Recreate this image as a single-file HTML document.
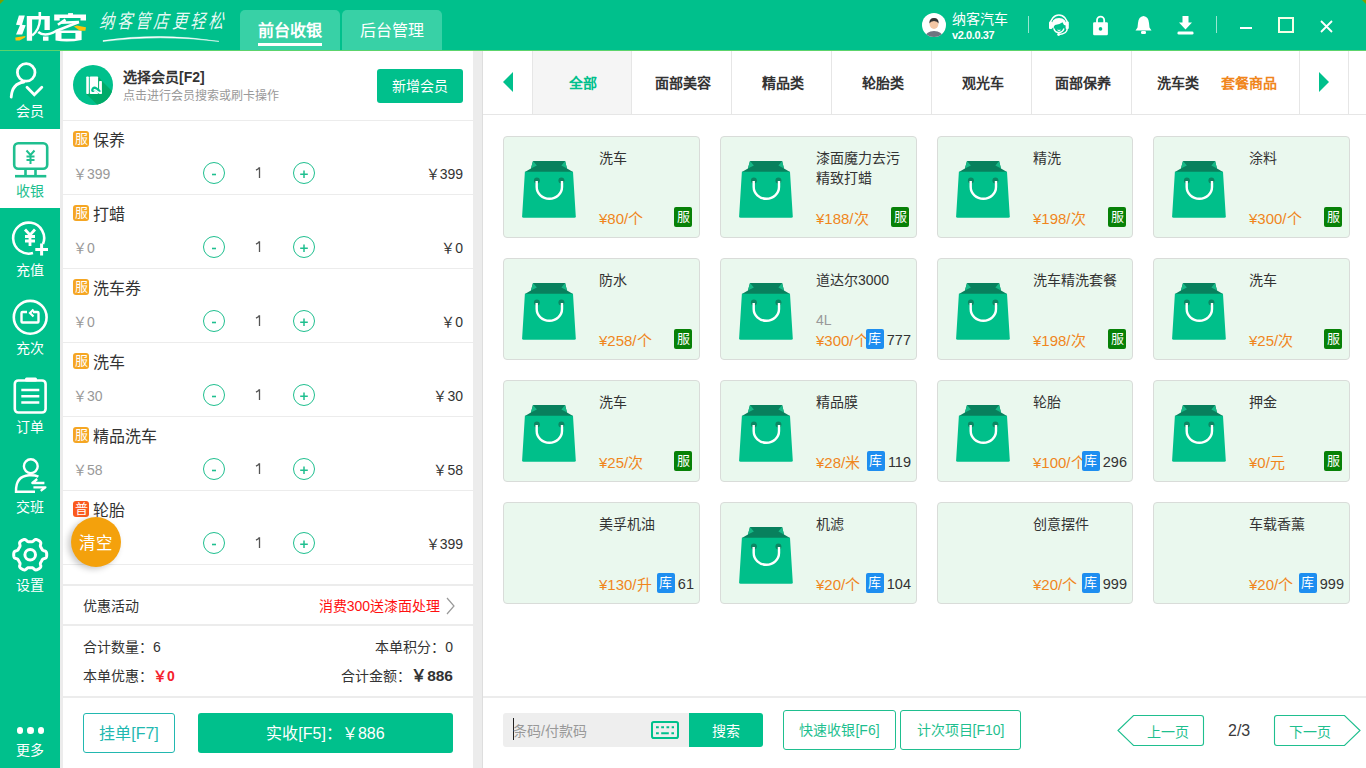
<!DOCTYPE html>
<html lang="zh-CN"><head><meta charset="utf-8">
<style>
*{margin:0;padding:0;box-sizing:border-box}
html,body{width:1366px;height:768px;overflow:hidden}
body{position:relative;font-family:"Liberation Sans",sans-serif;background:#fff;color:#333}
.a{position:absolute}
svg{display:block}
#hdr{left:0;top:0;width:1366px;height:50px;background:#00c08c}
#hdrline{left:0;top:50px;width:1366px;height:1px;background:#5cd46c}
.tab{top:10px;width:100px;height:40px;background:#38d1a6;border-radius:5px 5px 0 0;color:#fff;font-size:16px;text-align:center;line-height:42px}
#nav{left:0;top:51px;width:60px;height:717px;background:#00c08c}
.nv{left:0;width:60px;color:#fff;font-size:14px;text-align:center}
.gstrip{background:#ececec}
.row{left:63px;width:410px;height:74px;border-bottom:1px solid #ececec}
.tag{width:16px;height:16px;border-radius:3px;color:#fff;font-size:13px;line-height:16px;text-align:center;overflow:visible}
.nm{font-size:16px;color:#333;line-height:16px}
.pr{font-size:14px;color:#999;line-height:14px}
.circ{width:22px;height:22px;border:1px solid #1fbf8f;border-radius:50%;color:#1fbf8f;font-size:13px;text-align:center;line-height:20px}
.qty{font-size:14.5px;color:#444;line-height:15px}
.tot{font-size:14px;color:#333;line-height:14px;text-align:right}
.ct{top:51px;height:63px;width:100px;border-right:1px solid #e6e6e6;font-size:14px;font-weight:bold;text-align:center;line-height:65px;color:#333;text-indent:2px}
.card{width:197px;height:102px;background:#eaf8ee;border:1px solid #d9dcd9;border-radius:4px}
.cn{left:95px;top:11px;font-size:14px;line-height:20px;color:#333}
.cp{left:95px;bottom:10px;font-size:15px;line-height:16px;color:#f0861c}
.sv{width:18px;height:20px;background:#078107;color:#fff;border-radius:2px;font-size:13px;line-height:20px;text-align:center}
.ku{width:18px;height:20px;background:#1e8ef0;color:#fff;border-radius:2px;font-size:13px;line-height:20px;text-align:center}
.kg{right:5px;top:70px;height:20px;display:flex;align-items:center}.kg span{font-size:14.5px;line-height:20px;color:#333;margin-left:3px;position:relative;top:1px}
.gbtn{border:1px solid #1fbf8f;border-radius:3px;color:#1fbf8f;font-size:14px;text-align:center}
</style></head><body>
<!-- HEADER -->
<div class="a" id="hdr"></div>
<div class="a" id="hdrline"></div>
<div class="a tab" style="left:240px;font-weight:bold">前台收银<div class="a" style="left:18px;top:33px;width:64px;height:2.5px;background:#fff"></div></div>
<div class="a tab" style="left:342px">后台管理</div>

<!-- LOGO -->
<svg class="a" style="left:0;top:0" width="95" height="48" viewBox="0 0 95 48">
<path d="M18.9 15.5 H24.8 L22 24.8 L25.7 25.3 L22.2 34.6 H16 L20 25.3 L16 24.8 Z" fill="#fff"/>
<path d="M15.3 37.4 Q20 36.8 25.5 36.1 L25 37.6 Q21.5 39.8 19.5 40.6 H15.6 Z" fill="#ffc20a"/>
<path d="M26.8 16 H49.8 V29.9 H44.5 V19.5 H32.1 V40.75 H26.8 Z" fill="#fff"/>
<rect x="38.5" y="12" width="2.6" height="4.5" fill="#fff"/>
<path d="M40 19 Q39.5 30 32.1 35.5" fill="none" stroke="#fff" stroke-width="2.4"/>
<rect x="43" y="36.5" width="5.5" height="4.25" fill="#fff"/>
<path d="M54.2 14.6 H86 V20.4 H80.5 V18 H59.7 V20.4 H54.2 Z" fill="#fff"/>
<rect x="68.1" y="13.1" width="4.9" height="2" fill="#fff"/>
<path d="M57.9 24.8 L65.5 19.6 M60.6 22.8 L78.7 22" fill="none" stroke="#fff" stroke-width="2.6"/>
<path d="M38.2 32 Q45 37.5 56 31 L79 22" fill="none" stroke="#fff" stroke-width="2.6"/>
<path d="M55.5 30.6 H81.6 V40 Q68 42.8 55.5 40.6 Z M61.5 33 V38.8 H75.4 V33 Z" fill="#fff" fill-rule="evenodd"/>
<path d="M73.9 26.4 L77 25.5 Q82 26.8 86 27.2 L85.4 30.8 Q82 30.8 79.6 30.4 Z" fill="#ffc20a"/>
</svg>
<div class="a" style="left:100px;top:11px;font-family:'Liberation Serif',serif;font-style:italic;font-size:15px;line-height:22px;color:rgba(255,255,255,.92);letter-spacing:3.3px;transform:skewX(-4deg) scaleY(1.3);transform-origin:0 0;top:7px">纳客管店更轻松</div>
<svg class="a" style="left:100px;top:32px" width="122" height="12"><path d="M3 8.6 Q60 0 119 9.4 Q60 2.2 3 9.4 Z" fill="#fff" stroke="#fff" stroke-width="0.5"/></svg>

<!-- HEADER RIGHT -->
<svg class="a" style="left:922px;top:13px" width="24" height="24" viewBox="0 0 24 24"><defs><clipPath id="avc"><circle cx="12" cy="12" r="12"/></clipPath></defs><circle cx="12" cy="12" r="12" fill="#fff"/><g clip-path="url(#avc)"><path d="M3 24 Q4 18.5 12 18 Q20 18.5 21 24 Z" fill="#6f7480"/><ellipse cx="12" cy="11" rx="4.4" ry="5" fill="#f3c7a5"/><path d="M7.4 10.5 Q7 5 12 5 Q17 5 16.6 10.5 Q15.5 8 12 8 Q8.5 8 7.4 10.5 Z" fill="#333"/></g></svg>
<div class="a" style="left:952px;top:11px;font-size:14px;line-height:16px;color:#fff">纳客汽车</div>
<div class="a" style="left:952px;top:29px;font-size:11px;line-height:12px;color:#fff;font-weight:bold;letter-spacing:-0.4px">v2.0.0.37</div>
<div class="a" style="left:1028px;top:16px;width:1px;height:17px;background:rgba(255,255,255,.6)"></div>
<svg class="a" style="left:1040px;top:8px" width="36" height="34" viewBox="1040 8 36 34"><path d="M1050.2 25 A8.7 10 0 0 1 1067.6 25" fill="none" stroke="#fff" stroke-width="1.5"/><path d="M1051.5 27 Q1051 18 1059 18 Q1066.5 18 1066.3 25.5 L1064 25 L1062.5 22.3 Q1060 24.5 1055 25 Q1053.5 26 1053.5 29 Z" fill="#fff"/><rect x="1049" y="21.5" width="3.2" height="7.5" rx="1" fill="#fff"/><rect x="1065.6" y="21.5" width="3.2" height="7.5" rx="1" fill="#fff"/><path d="M1053.8 28.5 Q1055 32.5 1058.8 32.5 Q1062.6 32.5 1064 28.5" fill="none" stroke="#fff" stroke-width="1.4"/><path d="M1057.5 30 Q1059 31 1060.5 30" fill="none" stroke="#fff" stroke-width="1"/><path d="M1067.3 28.5 Q1067 34 1059 34.5" fill="none" stroke="#fff" stroke-width="1.5"/><circle cx="1058.6" cy="34.5" r="1.4" fill="#fff"/></svg>
<svg class="a" style="left:1092px;top:15px" width="17" height="21" viewBox="1092 15 17 21"><path d="M1097 23 V20.3 A3.6 3.6 0 0 1 1104.2 20.3 V23" fill="none" stroke="#fff" stroke-width="1.8"/><rect x="1093.1" y="22.2" width="14.8" height="13.1" rx="1.2" fill="#fff"/><circle cx="1100.5" cy="28.9" r="1.8" fill="#00c08c"/></svg>
<svg class="a" style="left:1135px;top:15px" width="17" height="20" viewBox="0 0 17 20"><path d="M8.5 1 Q13.5 1.5 14 8 L14.5 12.5 L16.5 15.5 H0.5 L2.5 12.5 L3 8 Q3.5 1.5 8.5 1 Z" fill="#fff"/><rect x="6" y="16" width="5" height="3" rx="1.2" fill="#fff"/></svg>
<svg class="a" style="left:1177px;top:15px" width="17" height="20" viewBox="0 0 17 20"><path d="M5.5 1 H11.5 V7.5 H15 L8.5 14.5 L2 7.5 H5.5 Z" fill="#fff"/><rect x="0.5" y="16.5" width="16" height="3" rx="1.3" fill="#fff"/></svg>
<div class="a" style="left:1216px;top:16px;width:1px;height:17px;background:rgba(255,255,255,.6)"></div>
<div class="a" style="left:1240px;top:27px;width:12px;height:2px;background:#fff"></div>
<div class="a" style="left:1278px;top:17px;width:16px;height:16px;border:2px solid #f4ffe6"></div>
<svg class="a" style="left:1320px;top:20px" width="13" height="13"><path d="M1 1 L12 12 M12 1 L1 12" stroke="#fff" stroke-width="1.8"/></svg>

<!-- NAV -->
<div class="a" id="nav"></div>
<div class="a" style="left:0;top:129px;width:60px;height:79px;background:#fff"></div>
<div class="a nv" style="top:100px">会员</div>
<div class="a nv" style="top:180px;color:#1fbf8f">收银</div>
<div class="a nv" style="top:259px">充值</div>
<div class="a nv" style="top:337px">充次</div>
<div class="a nv" style="top:416px">订单</div>
<div class="a nv" style="top:496px">交班</div>
<div class="a nv" style="top:574px">设置</div>
<div class="a nv" style="top:738.5px;left:0px">更多</div>

<!-- NAV ICONS -->
<svg class="a" style="left:0;top:51px" width="60" height="560" viewBox="0 51 60 560">
<g fill="none" stroke="#fff" stroke-width="2.8" stroke-linecap="round">
<circle cx="26.2" cy="72.4" r="8.8"/>
<path d="M11.2 97.2 Q12 83.5 24 82"/>
<path d="M27 87.2 L34.3 94.8 L41.8 87.2"/>
</g>
<g fill="none" stroke="#1fbf8f" stroke-width="2.6">
<rect x="14.2" y="143.3" width="33" height="25.5" rx="4"/>
<path d="M25.5 169 V175 M35.5 169 V175"/>
<path d="M15 176.2 H46.3"/>
<path d="M26.5 150.5 L30.5 155 L34.5 150.5 M30.5 155 V164 M26.5 156.5 H34.5 M26.5 160 H34.5" stroke-width="2"/>
</g>
<g fill="none" stroke="#fff" stroke-width="2.6">
<path d="M43 244 A15.5 15.5 0 1 0 33 253" />
<path d="M41.6 243.5 V255.5 M35.3 249.5 H48" stroke-width="3"/>
<path d="M25 229.5 L30 235 L35 229.5 M30 235 V246 M25 236.5 H35 M25 241 H35" stroke-width="2.8"/>
<circle cx="30.2" cy="317.3" r="16.4"/>
<path d="M27 312 H22.5 Q21.5 312 21.5 313 V321.5 Q21.5 322.5 22.5 322.5 H37.5 Q38.5 322.5 38.5 321.5 V313 Q38.5 312 37.5 312 H33" stroke-width="2.4"/>
<path d="M33.5 316.5 L30 313 L33.5 309.5" stroke-width="2.2"/>
<rect x="14.8" y="380.5" width="30.8" height="32" rx="3.5"/>
<path d="M21.3 390 H39.3 M21.3 396.2 H39.3 M21.3 402.5 H39.3" stroke-width="2.4"/>
<circle cx="30.8" cy="466.2" r="6.9" stroke-width="2.4"/>
<path d="M35 491.8 H16 Q15.6 476 29 475.3 Q35 475 38.4 476.6" stroke-width="2.4"/>
<path d="M44.4 483 H32.3 L37.2 479 M33.4 487.3 H45.4 L40.7 490.8" stroke-width="2.3" stroke-linejoin="round"/>
</g>
<rect x="25" y="377.5" width="12" height="4" rx="1.5" fill="#fff"/>
<g fill="none" stroke="#fff" stroke-width="2.8">
<path d="M46.70 554.70 L46.70 554.41 L46.69 554.12 L46.67 553.84 L46.64 553.55 L46.60 553.26 L46.55 552.98 L46.49 552.70 L46.40 552.42 L46.29 552.15 L46.14 551.89 L45.94 551.64 L45.67 551.41 L45.32 551.21 L44.91 551.03 L44.45 550.88 L43.99 550.75 L43.57 550.61 L43.22 550.47 L42.94 550.31 L42.71 550.15 L42.53 549.97 L42.38 549.78 L42.25 549.59 L42.13 549.39 L42.01 549.19 L41.90 548.99 L41.79 548.79 L41.68 548.59 L41.57 548.40 L41.46 548.20 L41.34 548.00 L41.23 547.81 L41.11 547.61 L40.99 547.42 L40.88 547.22 L40.76 547.03 L40.65 546.82 L40.55 546.61 L40.46 546.39 L40.40 546.14 L40.37 545.86 L40.37 545.54 L40.43 545.16 L40.52 544.74 L40.63 544.27 L40.73 543.80 L40.78 543.35 L40.78 542.95 L40.72 542.60 L40.60 542.30 L40.45 542.04 L40.27 541.80 L40.08 541.59 L39.87 541.40 L39.64 541.21 L39.42 541.04 L39.18 540.87 L38.94 540.71 L38.70 540.56 L38.45 540.41 L38.20 540.27 L37.94 540.14 L37.69 540.01 L37.42 539.89 L37.16 539.78 L36.89 539.68 L36.61 539.59 L36.33 539.53 L36.04 539.49 L35.74 539.49 L35.42 539.54 L35.09 539.66 L34.74 539.86 L34.38 540.13 L34.02 540.45 L33.67 540.78 L33.35 541.08 L33.05 541.31 L32.77 541.48 L32.51 541.59 L32.27 541.65 L32.03 541.69 L31.80 541.71 L31.56 541.72 L31.34 541.72 L31.11 541.71 L30.88 541.71 L30.65 541.70 L30.43 541.70 L30.20 541.70 L29.97 541.70 L29.75 541.70 L29.52 541.71 L29.29 541.71 L29.06 541.72 L28.84 541.72 L28.60 541.71 L28.37 541.69 L28.13 541.65 L27.89 541.59 L27.63 541.48 L27.35 541.31 L27.05 541.08 L26.73 540.78 L26.38 540.45 L26.02 540.13 L25.66 539.86 L25.31 539.66 L24.98 539.54 L24.66 539.49 L24.36 539.49 L24.07 539.53 L23.79 539.59 L23.51 539.68 L23.24 539.78 L22.98 539.89 L22.71 540.01 L22.46 540.14 L22.20 540.27 L21.95 540.41 L21.70 540.56 L21.46 540.71 L21.22 540.87 L20.98 541.04 L20.76 541.21 L20.53 541.40 L20.32 541.59 L20.13 541.80 L19.95 542.04 L19.80 542.30 L19.68 542.60 L19.62 542.95 L19.62 543.35 L19.67 543.80 L19.77 544.27 L19.88 544.74 L19.97 545.16 L20.03 545.54 L20.03 545.86 L20.00 546.14 L19.94 546.39 L19.85 546.61 L19.75 546.82 L19.64 547.03 L19.52 547.22 L19.41 547.42 L19.29 547.61 L19.17 547.81 L19.06 548.00 L18.94 548.20 L18.83 548.40 L18.72 548.59 L18.61 548.79 L18.50 548.99 L18.39 549.19 L18.27 549.39 L18.15 549.59 L18.02 549.78 L17.87 549.97 L17.69 550.15 L17.46 550.31 L17.18 550.47 L16.83 550.61 L16.41 550.75 L15.95 550.88 L15.49 551.03 L15.08 551.21 L14.73 551.41 L14.46 551.64 L14.26 551.89 L14.11 552.15 L14.00 552.42 L13.91 552.70 L13.85 552.98 L13.80 553.26 L13.76 553.55 L13.73 553.84 L13.71 554.12 L13.70 554.41 L13.70 554.70 L13.70 554.99 L13.71 555.28 L13.73 555.56 L13.76 555.85 L13.80 556.14 L13.85 556.42 L13.91 556.70 L14.00 556.98 L14.11 557.25 L14.26 557.51 L14.46 557.76 L14.73 557.99 L15.08 558.19 L15.49 558.37 L15.95 558.52 L16.41 558.65 L16.83 558.79 L17.18 558.93 L17.46 559.09 L17.69 559.25 L17.87 559.43 L18.02 559.62 L18.15 559.81 L18.27 560.01 L18.39 560.21 L18.50 560.41 L18.61 560.61 L18.72 560.81 L18.83 561.00 L18.94 561.20 L19.06 561.40 L19.17 561.59 L19.29 561.79 L19.41 561.98 L19.52 562.18 L19.64 562.37 L19.75 562.58 L19.85 562.79 L19.94 563.01 L20.00 563.26 L20.03 563.54 L20.03 563.86 L19.97 564.24 L19.88 564.66 L19.77 565.13 L19.67 565.60 L19.62 566.05 L19.62 566.45 L19.68 566.80 L19.80 567.10 L19.95 567.36 L20.13 567.60 L20.32 567.81 L20.53 568.00 L20.76 568.19 L20.98 568.36 L21.22 568.53 L21.46 568.69 L21.70 568.84 L21.95 568.99 L22.20 569.13 L22.46 569.26 L22.71 569.39 L22.98 569.51 L23.24 569.62 L23.51 569.72 L23.79 569.81 L24.07 569.87 L24.36 569.91 L24.66 569.91 L24.98 569.86 L25.31 569.74 L25.66 569.54 L26.02 569.27 L26.38 568.95 L26.73 568.62 L27.05 568.32 L27.35 568.09 L27.63 567.92 L27.89 567.81 L28.13 567.75 L28.37 567.71 L28.60 567.69 L28.84 567.68 L29.06 567.68 L29.29 567.69 L29.52 567.69 L29.75 567.70 L29.97 567.70 L30.20 567.70 L30.43 567.70 L30.65 567.70 L30.88 567.69 L31.11 567.69 L31.34 567.68 L31.56 567.68 L31.80 567.69 L32.03 567.71 L32.27 567.75 L32.51 567.81 L32.77 567.92 L33.05 568.09 L33.35 568.32 L33.67 568.62 L34.02 568.95 L34.38 569.27 L34.74 569.54 L35.09 569.74 L35.42 569.86 L35.74 569.91 L36.04 569.91 L36.33 569.87 L36.61 569.81 L36.89 569.72 L37.16 569.62 L37.42 569.51 L37.69 569.39 L37.94 569.26 L38.20 569.13 L38.45 568.99 L38.70 568.84 L38.94 568.69 L39.18 568.53 L39.42 568.36 L39.64 568.19 L39.87 568.00 L40.08 567.81 L40.27 567.60 L40.45 567.36 L40.60 567.10 L40.72 566.80 L40.78 566.45 L40.78 566.05 L40.73 565.60 L40.63 565.13 L40.52 564.66 L40.43 564.24 L40.37 563.86 L40.37 563.54 L40.40 563.26 L40.46 563.01 L40.55 562.79 L40.65 562.58 L40.76 562.37 L40.88 562.18 L40.99 561.98 L41.11 561.79 L41.23 561.59 L41.34 561.40 L41.46 561.20 L41.57 561.00 L41.68 560.81 L41.79 560.61 L41.90 560.41 L42.01 560.21 L42.13 560.01 L42.25 559.81 L42.38 559.62 L42.53 559.43 L42.71 559.25 L42.94 559.09 L43.22 558.93 L43.57 558.79 L43.99 558.65 L44.45 558.52 L44.91 558.37 L45.32 558.19 L45.67 557.99 L45.94 557.76 L46.14 557.51 L46.29 557.25 L46.40 556.98 L46.49 556.70 L46.55 556.42 L46.60 556.14 L46.64 555.85 L46.67 555.56 L46.69 555.28 L46.70 554.99 L46.70 554.70 Z" stroke-width="3" stroke-linejoin="round"/>
<circle cx="30.2" cy="554.7" r="5.3" stroke-width="3"/>
</g>
</svg>
<div class="a" style="left:16.8px;top:727px;width:6.6px;height:6.6px;border-radius:50%;background:#fff"></div>
<div class="a" style="left:27.3px;top:727px;width:6.6px;height:6.6px;border-radius:50%;background:#fff"></div>
<div class="a" style="left:37.9px;top:727px;width:6.6px;height:6.6px;border-radius:50%;background:#fff"></div>

<!-- strips -->
<div class="a gstrip" style="left:60px;top:51px;width:3px;height:717px"></div>
<div class="a gstrip" style="left:473px;top:51px;width:10px;height:717px;border-right:1px solid #dedede"></div>

<!-- LEFT PANEL -->
<div class="a" style="left:63px;top:120px;width:410px;height:1px;background:#ececec"></div>
<svg class="a" style="left:73px;top:64.75px" width="40" height="40" viewBox="0 0 40 40"><defs><clipPath id="mc"><circle cx="20" cy="20" r="20"/></clipPath></defs><circle cx="20" cy="20" r="20" fill="#00c08c"/><path d="M13.5 29.2 L25.5 11.5 L29 16 L52 39 L37 52 Z" fill="#00ab68" clip-path="url(#mc)"/><rect x="13.25" y="11.45" width="2.6" height="17.6" rx="0.8" fill="#fff"/><rect x="16.8" y="11.45" width="8.3" height="17.6" rx="0.8" fill="#fff"/><rect x="26.1" y="16.05" width="2.8" height="13" rx="0.8" fill="#fff"/><path d="M19.9 25.2 Q20.6 22.4 23 24 L25.8 26.2" fill="none" stroke="#00c08c" stroke-width="3.6" stroke-linecap="round"/><path d="M20.9 25.6 Q21.3 24.2 22.7 25.1 L25 27 Q25.9 27.7 27.2 27.7 H28.9" fill="none" stroke="#fff" stroke-width="1.6"/></svg>
<div class="a" style="left:123px;top:69px;font-size:14px;font-weight:bold;color:#333;line-height:16px">选择会员[F2]</div>
<div class="a" style="left:123px;top:89px;font-size:12px;color:#999;line-height:14px">点击进行会员搜索或刷卡操作</div>
<div class="a" style="left:377px;top:69px;width:86px;height:34px;background:#00c08c;border-radius:3px;color:#fff;font-size:14px;line-height:34px;text-align:center">新增会员</div>

<!-- ROWS -->
<div class="a" style="left:63px;top:194px;width:410px;height:1px;background:#ececec"></div>
<div class="a tag" style="left:73px;top:131px;background:#f5a623">服</div>
<div class="a nm" style="left:93px;top:133px">保养</div>
<div class="a pr" style="left:73px;top:167px">￥399</div>
<div class="a circ" style="left:203px;top:162px"><svg class="a" style="left:-1px;top:-1px" width="22" height="22"><path d="M9 12.5 H13" stroke="#1fbf8f" stroke-width="1.6"/></svg></div>
<svg class="a" style="left:250px;top:164px" width="16" height="20"><path d="M9.5 3.3 V14 M6 6.2 Q8.3 5 9.5 3.3" fill="none" stroke="#555" stroke-width="1.3"/></svg>
<div class="a circ" style="left:293px;top:162px"><svg class="a" style="left:-1px;top:-1px" width="22" height="22"><path d="M7.2 12.2 H14.8 M11 8.4 V16" stroke="#1fbf8f" stroke-width="1.5"/></svg></div>
<div class="a tot" style="left:363px;width:100px;top:167px">￥399</div>
<div class="a" style="left:63px;top:268px;width:410px;height:1px;background:#ececec"></div>
<div class="a tag" style="left:73px;top:205px;background:#f5a623">服</div>
<div class="a nm" style="left:93px;top:207px">打蜡</div>
<div class="a pr" style="left:73px;top:241px">￥0</div>
<div class="a circ" style="left:203px;top:236px"><svg class="a" style="left:-1px;top:-1px" width="22" height="22"><path d="M9 12.5 H13" stroke="#1fbf8f" stroke-width="1.6"/></svg></div>
<svg class="a" style="left:250px;top:238px" width="16" height="20"><path d="M9.5 3.3 V14 M6 6.2 Q8.3 5 9.5 3.3" fill="none" stroke="#555" stroke-width="1.3"/></svg>
<div class="a circ" style="left:293px;top:236px"><svg class="a" style="left:-1px;top:-1px" width="22" height="22"><path d="M7.2 12.2 H14.8 M11 8.4 V16" stroke="#1fbf8f" stroke-width="1.5"/></svg></div>
<div class="a tot" style="left:363px;width:100px;top:241px">￥0</div>
<div class="a" style="left:63px;top:342px;width:410px;height:1px;background:#ececec"></div>
<div class="a tag" style="left:73px;top:279px;background:#f5a623">服</div>
<div class="a nm" style="left:93px;top:281px">洗车券</div>
<div class="a pr" style="left:73px;top:315px">￥0</div>
<div class="a circ" style="left:203px;top:310px"><svg class="a" style="left:-1px;top:-1px" width="22" height="22"><path d="M9 12.5 H13" stroke="#1fbf8f" stroke-width="1.6"/></svg></div>
<svg class="a" style="left:250px;top:312px" width="16" height="20"><path d="M9.5 3.3 V14 M6 6.2 Q8.3 5 9.5 3.3" fill="none" stroke="#555" stroke-width="1.3"/></svg>
<div class="a circ" style="left:293px;top:310px"><svg class="a" style="left:-1px;top:-1px" width="22" height="22"><path d="M7.2 12.2 H14.8 M11 8.4 V16" stroke="#1fbf8f" stroke-width="1.5"/></svg></div>
<div class="a tot" style="left:363px;width:100px;top:315px">￥0</div>
<div class="a" style="left:63px;top:416px;width:410px;height:1px;background:#ececec"></div>
<div class="a tag" style="left:73px;top:353px;background:#f5a623">服</div>
<div class="a nm" style="left:93px;top:355px">洗车</div>
<div class="a pr" style="left:73px;top:389px">￥30</div>
<div class="a circ" style="left:203px;top:384px"><svg class="a" style="left:-1px;top:-1px" width="22" height="22"><path d="M9 12.5 H13" stroke="#1fbf8f" stroke-width="1.6"/></svg></div>
<svg class="a" style="left:250px;top:386px" width="16" height="20"><path d="M9.5 3.3 V14 M6 6.2 Q8.3 5 9.5 3.3" fill="none" stroke="#555" stroke-width="1.3"/></svg>
<div class="a circ" style="left:293px;top:384px"><svg class="a" style="left:-1px;top:-1px" width="22" height="22"><path d="M7.2 12.2 H14.8 M11 8.4 V16" stroke="#1fbf8f" stroke-width="1.5"/></svg></div>
<div class="a tot" style="left:363px;width:100px;top:389px">￥30</div>
<div class="a" style="left:63px;top:490px;width:410px;height:1px;background:#ececec"></div>
<div class="a tag" style="left:73px;top:427px;background:#f5a623">服</div>
<div class="a nm" style="left:93px;top:429px">精品洗车</div>
<div class="a pr" style="left:73px;top:463px">￥58</div>
<div class="a circ" style="left:203px;top:458px"><svg class="a" style="left:-1px;top:-1px" width="22" height="22"><path d="M9 12.5 H13" stroke="#1fbf8f" stroke-width="1.6"/></svg></div>
<svg class="a" style="left:250px;top:460px" width="16" height="20"><path d="M9.5 3.3 V14 M6 6.2 Q8.3 5 9.5 3.3" fill="none" stroke="#555" stroke-width="1.3"/></svg>
<div class="a circ" style="left:293px;top:458px"><svg class="a" style="left:-1px;top:-1px" width="22" height="22"><path d="M7.2 12.2 H14.8 M11 8.4 V16" stroke="#1fbf8f" stroke-width="1.5"/></svg></div>
<div class="a tot" style="left:363px;width:100px;top:463px">￥58</div>
<div class="a" style="left:63px;top:564px;width:410px;height:1px;background:#ececec"></div>
<div class="a tag" style="left:73px;top:501px;background:#fa5a1e">普</div>
<div class="a nm" style="left:93px;top:503px">轮胎</div>
<div class="a pr" style="left:73px;top:537px">￥399</div>
<div class="a circ" style="left:203px;top:532px"><svg class="a" style="left:-1px;top:-1px" width="22" height="22"><path d="M9 12.5 H13" stroke="#1fbf8f" stroke-width="1.6"/></svg></div>
<svg class="a" style="left:250px;top:534px" width="16" height="20"><path d="M9.5 3.3 V14 M6 6.2 Q8.3 5 9.5 3.3" fill="none" stroke="#555" stroke-width="1.3"/></svg>
<div class="a circ" style="left:293px;top:532px"><svg class="a" style="left:-1px;top:-1px" width="22" height="22"><path d="M7.2 12.2 H14.8 M11 8.4 V16" stroke="#1fbf8f" stroke-width="1.5"/></svg></div>
<div class="a tot" style="left:363px;width:100px;top:537px">￥399</div>
<!-- LEFT BOTTOM -->
<div class="a" style="left:71px;top:517px;width:50px;height:50px;border-radius:50%;background:#f4a10c;box-shadow:-3px 2px 6px rgba(0,0,0,.22);color:#fff;font-size:16.5px;line-height:52px;text-align:center">清空</div>
<div class="a" style="left:63px;top:584px;width:410px;height:2px;background:#ececec"></div>
<div class="a" style="left:83px;top:598px;font-size:14px;line-height:16px;color:#333">优惠活动</div>
<div class="a" style="left:298px;width:142px;top:598px;font-size:14px;line-height:16px;color:#ff1010;text-align:right">消费300送漆面处理</div>
<svg class="a" style="left:445px;top:597px" width="12" height="18"><path d="M2 1 L9 9 L2 17" fill="none" stroke="#999" stroke-width="1.2"/></svg>
<div class="a" style="left:63px;top:624px;width:410px;height:2px;background:#ececec"></div>
<div class="a" style="left:83px;top:639px;font-size:14px;line-height:16px;color:#333">合计数量：6</div>
<div class="a" style="left:300px;width:153px;top:639px;font-size:14px;line-height:16px;color:#333;text-align:right">本单积分：0</div>
<div class="a" style="left:83px;top:668px;font-size:14px;line-height:16px;color:#333">本单优惠：<b style="color:#f5222d">￥0</b></div>
<div class="a" style="left:300px;width:153px;top:668px;font-size:14px;line-height:16px;color:#333;text-align:right">合计金额：<b style="font-size:15.5px">￥886</b></div>
<div class="a" style="left:63px;top:696px;width:410px;height:2px;background:#ececec"></div>
<div class="a" style="left:83px;top:713px;width:92px;height:40px;border:1px solid #22b8b0;border-radius:3px;color:#22b8b0;font-size:16px;line-height:40px;text-align:center">挂单[F7]</div>
<div class="a" style="left:198px;top:713px;width:255px;height:40px;background:#00c08c;border-radius:3px;color:#fff;font-size:16px;line-height:42px;text-align:center">实收[F5]：￥886</div>

<!-- RIGHT -->
<div class="a" style="left:483px;top:114px;width:883px;height:1px;background:#e6e6e6"></div>
<svg class="a" style="left:502px;top:72px" width="12" height="20"><path d="M1 10 L11 0 V20 Z" fill="#00c08c"/></svg>
<div class="a" style="left:532px;top:51px;width:1px;height:63px;background:#e6e6e6"></div>
<div class="a ct" style="left:533px;background:#f5f5f5;color:#00c08c;width:99px">全部</div>
<div class="a ct" style="left:633px;width:99px">面部美容</div>
<div class="a ct" style="left:733px;width:99px">精品类</div>
<div class="a ct" style="left:833px;width:99px">轮胎类</div>
<div class="a ct" style="left:933px;width:99px">观光车</div>
<div class="a ct" style="left:1033px;width:99px">面部保养</div>
<div class="a ct" style="left:1133px;width:167px;border-right:1px solid #e6e6e6;text-align:left;padding-left:22px">洗车类<span style="color:#f0861c;margin-left:22px">套餐商品</span></div>
<svg class="a" style="left:1318px;top:72px" width="12" height="20"><path d="M11 10 L1 0 V20 Z" fill="#00c08c"/></svg>
<div class="a" style="left:1348px;top:51px;width:1px;height:63px;background:#e6e6e6"></div>
<div class="a card" style="left:503px;top:136px"><svg class="a" style="left:14px;top:19px" width="62" height="66" viewBox="0 0 62 66"><path d="M15 5 H47.1 L49 12.5 L55 15.9 H6.9 L12.9 12.5 Z" fill="#08805d"/><path d="M15 5 L18.9 9.6 L12.9 12.5 Z M47.1 5 L43.4 9.6 L49 12.5 Z" fill="#16b886"/><path d="M6.9 15.8 H55 L57.8 60.2 Q57.9 61.8 56.3 61.8 H5.6 Q4 61.8 4.1 60.2 Z" fill="#00bf8a"/><circle cx="18.9" cy="24.5" r="3" fill="#0b8763"/><circle cx="43.4" cy="24.5" r="3" fill="#0b8763"/><path d="M18.7 25 V31 A12.65 11.8 0 0 0 44 31 V25" fill="none" stroke="#fff" stroke-width="2.4"/></svg><div class="a cn">洗车</div><div class="a cp">¥80/个</div><div class="a sv" style="left:170px;top:70px">服</div></div>
<div class="a card" style="left:720px;top:136px"><svg class="a" style="left:14px;top:19px" width="62" height="66" viewBox="0 0 62 66"><path d="M15 5 H47.1 L49 12.5 L55 15.9 H6.9 L12.9 12.5 Z" fill="#08805d"/><path d="M15 5 L18.9 9.6 L12.9 12.5 Z M47.1 5 L43.4 9.6 L49 12.5 Z" fill="#16b886"/><path d="M6.9 15.8 H55 L57.8 60.2 Q57.9 61.8 56.3 61.8 H5.6 Q4 61.8 4.1 60.2 Z" fill="#00bf8a"/><circle cx="18.9" cy="24.5" r="3" fill="#0b8763"/><circle cx="43.4" cy="24.5" r="3" fill="#0b8763"/><path d="M18.7 25 V31 A12.65 11.8 0 0 0 44 31 V25" fill="none" stroke="#fff" stroke-width="2.4"/></svg><div class="a cn">漆面魔力去污<br>精致打蜡</div><div class="a cp">¥188/次</div><div class="a sv" style="left:170px;top:70px">服</div></div>
<div class="a card" style="width:196px;left:937px;top:136px"><svg class="a" style="left:14px;top:19px" width="62" height="66" viewBox="0 0 62 66"><path d="M15 5 H47.1 L49 12.5 L55 15.9 H6.9 L12.9 12.5 Z" fill="#08805d"/><path d="M15 5 L18.9 9.6 L12.9 12.5 Z M47.1 5 L43.4 9.6 L49 12.5 Z" fill="#16b886"/><path d="M6.9 15.8 H55 L57.8 60.2 Q57.9 61.8 56.3 61.8 H5.6 Q4 61.8 4.1 60.2 Z" fill="#00bf8a"/><circle cx="18.9" cy="24.5" r="3" fill="#0b8763"/><circle cx="43.4" cy="24.5" r="3" fill="#0b8763"/><path d="M18.7 25 V31 A12.65 11.8 0 0 0 44 31 V25" fill="none" stroke="#fff" stroke-width="2.4"/></svg><div class="a cn">精洗</div><div class="a cp">¥198/次</div><div class="a sv" style="left:170px;top:70px">服</div></div>
<div class="a card" style="left:1153px;top:136px"><svg class="a" style="left:14px;top:19px" width="62" height="66" viewBox="0 0 62 66"><path d="M15 5 H47.1 L49 12.5 L55 15.9 H6.9 L12.9 12.5 Z" fill="#08805d"/><path d="M15 5 L18.9 9.6 L12.9 12.5 Z M47.1 5 L43.4 9.6 L49 12.5 Z" fill="#16b886"/><path d="M6.9 15.8 H55 L57.8 60.2 Q57.9 61.8 56.3 61.8 H5.6 Q4 61.8 4.1 60.2 Z" fill="#00bf8a"/><circle cx="18.9" cy="24.5" r="3" fill="#0b8763"/><circle cx="43.4" cy="24.5" r="3" fill="#0b8763"/><path d="M18.7 25 V31 A12.65 11.8 0 0 0 44 31 V25" fill="none" stroke="#fff" stroke-width="2.4"/></svg><div class="a cn">涂料</div><div class="a cp">¥300/个</div><div class="a sv" style="left:170px;top:70px">服</div></div>
<div class="a card" style="left:503px;top:258px"><svg class="a" style="left:14px;top:19px" width="62" height="66" viewBox="0 0 62 66"><path d="M15 5 H47.1 L49 12.5 L55 15.9 H6.9 L12.9 12.5 Z" fill="#08805d"/><path d="M15 5 L18.9 9.6 L12.9 12.5 Z M47.1 5 L43.4 9.6 L49 12.5 Z" fill="#16b886"/><path d="M6.9 15.8 H55 L57.8 60.2 Q57.9 61.8 56.3 61.8 H5.6 Q4 61.8 4.1 60.2 Z" fill="#00bf8a"/><circle cx="18.9" cy="24.5" r="3" fill="#0b8763"/><circle cx="43.4" cy="24.5" r="3" fill="#0b8763"/><path d="M18.7 25 V31 A12.65 11.8 0 0 0 44 31 V25" fill="none" stroke="#fff" stroke-width="2.4"/></svg><div class="a cn">防水</div><div class="a cp">¥258/个</div><div class="a sv" style="left:170px;top:70px">服</div></div>
<div class="a card" style="left:720px;top:258px"><svg class="a" style="left:14px;top:19px" width="62" height="66" viewBox="0 0 62 66"><path d="M15 5 H47.1 L49 12.5 L55 15.9 H6.9 L12.9 12.5 Z" fill="#08805d"/><path d="M15 5 L18.9 9.6 L12.9 12.5 Z M47.1 5 L43.4 9.6 L49 12.5 Z" fill="#16b886"/><path d="M6.9 15.8 H55 L57.8 60.2 Q57.9 61.8 56.3 61.8 H5.6 Q4 61.8 4.1 60.2 Z" fill="#00bf8a"/><circle cx="18.9" cy="24.5" r="3" fill="#0b8763"/><circle cx="43.4" cy="24.5" r="3" fill="#0b8763"/><path d="M18.7 25 V31 A12.65 11.8 0 0 0 44 31 V25" fill="none" stroke="#fff" stroke-width="2.4"/></svg><div class="a cn">道达尔3000</div><div class="a" style="left:95px;top:53px;font-size:14px;line-height:16px;color:#999">4L</div><div class="a cp">¥300/个</div><div class="a kg"><div class="ku">库</div><span>777</span></div></div>
<div class="a card" style="width:196px;left:937px;top:258px"><svg class="a" style="left:14px;top:19px" width="62" height="66" viewBox="0 0 62 66"><path d="M15 5 H47.1 L49 12.5 L55 15.9 H6.9 L12.9 12.5 Z" fill="#08805d"/><path d="M15 5 L18.9 9.6 L12.9 12.5 Z M47.1 5 L43.4 9.6 L49 12.5 Z" fill="#16b886"/><path d="M6.9 15.8 H55 L57.8 60.2 Q57.9 61.8 56.3 61.8 H5.6 Q4 61.8 4.1 60.2 Z" fill="#00bf8a"/><circle cx="18.9" cy="24.5" r="3" fill="#0b8763"/><circle cx="43.4" cy="24.5" r="3" fill="#0b8763"/><path d="M18.7 25 V31 A12.65 11.8 0 0 0 44 31 V25" fill="none" stroke="#fff" stroke-width="2.4"/></svg><div class="a cn">洗车精洗套餐</div><div class="a cp">¥198/次</div><div class="a sv" style="left:170px;top:70px">服</div></div>
<div class="a card" style="left:1153px;top:258px"><svg class="a" style="left:14px;top:19px" width="62" height="66" viewBox="0 0 62 66"><path d="M15 5 H47.1 L49 12.5 L55 15.9 H6.9 L12.9 12.5 Z" fill="#08805d"/><path d="M15 5 L18.9 9.6 L12.9 12.5 Z M47.1 5 L43.4 9.6 L49 12.5 Z" fill="#16b886"/><path d="M6.9 15.8 H55 L57.8 60.2 Q57.9 61.8 56.3 61.8 H5.6 Q4 61.8 4.1 60.2 Z" fill="#00bf8a"/><circle cx="18.9" cy="24.5" r="3" fill="#0b8763"/><circle cx="43.4" cy="24.5" r="3" fill="#0b8763"/><path d="M18.7 25 V31 A12.65 11.8 0 0 0 44 31 V25" fill="none" stroke="#fff" stroke-width="2.4"/></svg><div class="a cn">洗车</div><div class="a cp">¥25/次</div><div class="a sv" style="left:170px;top:70px">服</div></div>
<div class="a card" style="left:503px;top:380px"><svg class="a" style="left:14px;top:19px" width="62" height="66" viewBox="0 0 62 66"><path d="M15 5 H47.1 L49 12.5 L55 15.9 H6.9 L12.9 12.5 Z" fill="#08805d"/><path d="M15 5 L18.9 9.6 L12.9 12.5 Z M47.1 5 L43.4 9.6 L49 12.5 Z" fill="#16b886"/><path d="M6.9 15.8 H55 L57.8 60.2 Q57.9 61.8 56.3 61.8 H5.6 Q4 61.8 4.1 60.2 Z" fill="#00bf8a"/><circle cx="18.9" cy="24.5" r="3" fill="#0b8763"/><circle cx="43.4" cy="24.5" r="3" fill="#0b8763"/><path d="M18.7 25 V31 A12.65 11.8 0 0 0 44 31 V25" fill="none" stroke="#fff" stroke-width="2.4"/></svg><div class="a cn">洗车</div><div class="a cp">¥25/次</div><div class="a sv" style="left:170px;top:70px">服</div></div>
<div class="a card" style="left:720px;top:380px"><svg class="a" style="left:14px;top:19px" width="62" height="66" viewBox="0 0 62 66"><path d="M15 5 H47.1 L49 12.5 L55 15.9 H6.9 L12.9 12.5 Z" fill="#08805d"/><path d="M15 5 L18.9 9.6 L12.9 12.5 Z M47.1 5 L43.4 9.6 L49 12.5 Z" fill="#16b886"/><path d="M6.9 15.8 H55 L57.8 60.2 Q57.9 61.8 56.3 61.8 H5.6 Q4 61.8 4.1 60.2 Z" fill="#00bf8a"/><circle cx="18.9" cy="24.5" r="3" fill="#0b8763"/><circle cx="43.4" cy="24.5" r="3" fill="#0b8763"/><path d="M18.7 25 V31 A12.65 11.8 0 0 0 44 31 V25" fill="none" stroke="#fff" stroke-width="2.4"/></svg><div class="a cn">精品膜</div><div class="a cp">¥28/米</div><div class="a kg"><div class="ku">库</div><span>119</span></div></div>
<div class="a card" style="width:196px;left:937px;top:380px"><svg class="a" style="left:14px;top:19px" width="62" height="66" viewBox="0 0 62 66"><path d="M15 5 H47.1 L49 12.5 L55 15.9 H6.9 L12.9 12.5 Z" fill="#08805d"/><path d="M15 5 L18.9 9.6 L12.9 12.5 Z M47.1 5 L43.4 9.6 L49 12.5 Z" fill="#16b886"/><path d="M6.9 15.8 H55 L57.8 60.2 Q57.9 61.8 56.3 61.8 H5.6 Q4 61.8 4.1 60.2 Z" fill="#00bf8a"/><circle cx="18.9" cy="24.5" r="3" fill="#0b8763"/><circle cx="43.4" cy="24.5" r="3" fill="#0b8763"/><path d="M18.7 25 V31 A12.65 11.8 0 0 0 44 31 V25" fill="none" stroke="#fff" stroke-width="2.4"/></svg><div class="a cn">轮胎</div><div class="a cp">¥100/个</div><div class="a kg"><div class="ku">库</div><span>296</span></div></div>
<div class="a card" style="left:1153px;top:380px"><svg class="a" style="left:14px;top:19px" width="62" height="66" viewBox="0 0 62 66"><path d="M15 5 H47.1 L49 12.5 L55 15.9 H6.9 L12.9 12.5 Z" fill="#08805d"/><path d="M15 5 L18.9 9.6 L12.9 12.5 Z M47.1 5 L43.4 9.6 L49 12.5 Z" fill="#16b886"/><path d="M6.9 15.8 H55 L57.8 60.2 Q57.9 61.8 56.3 61.8 H5.6 Q4 61.8 4.1 60.2 Z" fill="#00bf8a"/><circle cx="18.9" cy="24.5" r="3" fill="#0b8763"/><circle cx="43.4" cy="24.5" r="3" fill="#0b8763"/><path d="M18.7 25 V31 A12.65 11.8 0 0 0 44 31 V25" fill="none" stroke="#fff" stroke-width="2.4"/></svg><div class="a cn">押金</div><div class="a cp">¥0/元</div><div class="a sv" style="left:170px;top:70px">服</div></div>
<div class="a card" style="left:503px;top:502px"><div class="a cn">美孚机油</div><div class="a cp">¥130/升</div><div class="a kg"><div class="ku">库</div><span>61</span></div></div>
<div class="a card" style="left:720px;top:502px"><svg class="a" style="left:14px;top:19px" width="62" height="66" viewBox="0 0 62 66"><path d="M15 5 H47.1 L49 12.5 L55 15.9 H6.9 L12.9 12.5 Z" fill="#08805d"/><path d="M15 5 L18.9 9.6 L12.9 12.5 Z M47.1 5 L43.4 9.6 L49 12.5 Z" fill="#16b886"/><path d="M6.9 15.8 H55 L57.8 60.2 Q57.9 61.8 56.3 61.8 H5.6 Q4 61.8 4.1 60.2 Z" fill="#00bf8a"/><circle cx="18.9" cy="24.5" r="3" fill="#0b8763"/><circle cx="43.4" cy="24.5" r="3" fill="#0b8763"/><path d="M18.7 25 V31 A12.65 11.8 0 0 0 44 31 V25" fill="none" stroke="#fff" stroke-width="2.4"/></svg><div class="a cn">机滤</div><div class="a cp">¥20/个</div><div class="a kg"><div class="ku">库</div><span>104</span></div></div>
<div class="a card" style="width:196px;left:937px;top:502px"><div class="a cn">创意摆件</div><div class="a cp">¥20/个</div><div class="a kg"><div class="ku">库</div><span>999</span></div></div>
<div class="a card" style="left:1153px;top:502px"><div class="a cn">车载香薰</div><div class="a cp">¥20/个</div><div class="a kg"><div class="ku">库</div><span>999</span></div></div>
<!-- RIGHT BOTTOM -->
<div class="a" style="left:483px;top:696px;width:883px;height:2px;background:#ececec"></div>
<div class="a" style="left:503px;top:713px;width:186px;height:34px;background:#eeeeee;border-radius:3px 0 0 3px"></div>
<div class="a" style="left:513px;top:718px;width:1px;height:22px;background:#222"></div>
<div class="a" style="left:513px;top:723px;font-size:14px;line-height:16px;color:#999">条码/付款码</div>
<svg class="a" style="left:650px;top:720px" width="30" height="20" viewBox="650 720 30 20"><rect x="652" y="721.9" width="26" height="16.2" rx="1.8" fill="none" stroke="#00c08c" stroke-width="2"/><path d="M656 727.3 H658.8 M661.2 727.3 H664 M666.5 727.3 H669.2 M671.7 727.3 H674 M656 733.2 H658.8 M661.2 733.2 H668.8 M671.4 733.2 H674" stroke="#00c08c" stroke-width="2"/></svg>
<div class="a" style="left:689px;top:713px;width:74px;height:34px;background:#00c08c;border-radius:0 3px 3px 0;color:#fff;font-size:14px;line-height:36px;text-align:center">搜索</div>
<div class="a gbtn" style="left:783px;top:710px;width:113px;height:40px;line-height:38px">快速收银[F6]</div>
<div class="a gbtn" style="left:900px;top:710px;width:121px;height:40px;line-height:38px">计次项目[F10]</div>
<svg class="a" style="left:1116px;top:714px" width="90" height="34"><path d="M2 16.5 L17.5 1.5 H85 Q87.5 1.5 87.5 4 V29 Q87.5 31.5 85 31.5 H17.5 Z" fill="none" stroke="#1fbf8f" stroke-width="1.1"/></svg>
<div class="a" style="left:1147px;top:724px;font-size:14px;line-height:16px;color:#1fbf8f">上一页</div>
<div class="a" style="left:1228px;top:722px;font-size:16px;line-height:18px;color:#3a3a3a">2/3</div>
<svg class="a" style="left:1272px;top:714px" width="92" height="34"><path d="M88 16.5 L72.5 1.5 H5 Q2.5 1.5 2.5 4 V29 Q2.5 31.5 5 31.5 H72.5 Z" fill="none" stroke="#1fbf8f" stroke-width="1.1"/></svg>
<div class="a" style="left:1289px;top:724px;font-size:14px;line-height:16px;color:#1fbf8f">下一页</div>

<svg class="a" style="left:0;top:0" width="5" height="5"><path d="M0 0 H4 L0 4 Z" fill="#7aa000"/></svg>
<svg class="a" style="left:1361px;top:0" width="5" height="5"><path d="M1 0 H5 V4 Z" fill="#7aa000"/></svg>
<!-- BODY -->
</body></html>
